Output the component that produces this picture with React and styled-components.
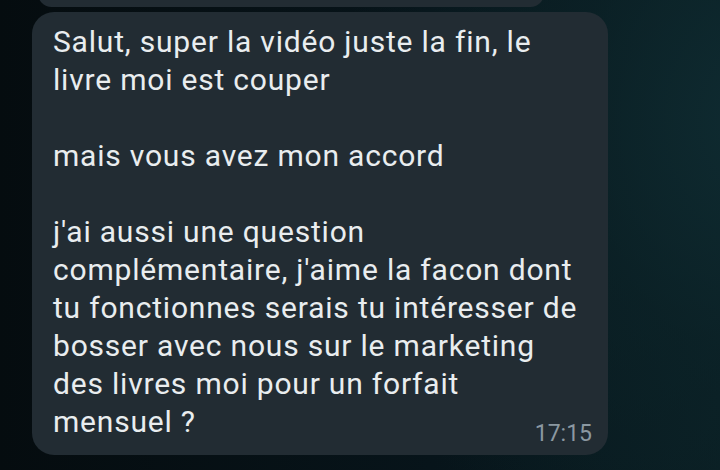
import React from "react";
import styled, { createGlobalStyle } from "styled-components";

const Global = createGlobalStyle`
  html, body { margin: 0; padding: 0; }
  body {
    width: 720px;
    height: 470px;
    overflow: hidden;
    background: #071216;
    font-family: Roboto, "Noto Sans", sans-serif;
  }
`;

const Screen = styled.div`
  width: 720px;
  height: 470px;
  background:
    radial-gradient(ellipse 420px 520px at 760px 120px, #0f2b31 0%, rgba(12,36,41,0.6) 45%, rgba(7,18,22,0) 100%),
    linear-gradient(90deg, #050c0f 0%, #07141a 60%, #0a1e23 100%);
  display: flex;
  flex-direction: column;
  gap: 5px;
  overflow: hidden;
`;

const PrevBubble = styled.div`
  margin-left: 38px;
  width: 506px;
  height: 27px;
  margin-top: -20px;
  background: #222c33;
  border-radius: 20px;
`;

const Bubble = styled.div`
  margin-left: 32px;
  width: 576px;
  box-sizing: border-box;
  background: #222c33;
  border-radius: 22px;
  padding: 11px 16px 8px 21px;
  display: flex;
  flex-direction: column;
`;

const Text = styled.div`
  color: #e9edef;
  font-size: 30px;
  letter-spacing: 0.8px;
  line-height: 38px;
  white-space: pre;
`;

const LastRow = styled.div`
  display: flex;
  justify-content: space-between;
  align-items: flex-end;
`;

const LastLine = styled(Text)`
  margin-bottom: 6px;
`;

const Time = styled.span`
  color: #8b98a1;
  font-size: 23px;
  line-height: 26px;
`;

const body = `Salut, super la vidéo juste la fin, le
livre moi est couper

mais vous avez mon accord

j'ai aussi une question
complémentaire, j'aime la facon dont
tu fonctionnes serais tu intéresser de
bosser avec nous sur le marketing
des livres moi pour un forfait`;

export default function App() {
  return (
    <>
      <Global />
      <Screen>
        <PrevBubble />
        <Bubble>
          <Text>{body}</Text>
          <LastRow>
            <LastLine>mensuel ?</LastLine>
            <Time>17:15</Time>
          </LastRow>
        </Bubble>
      </Screen>
    </>
  );
}
